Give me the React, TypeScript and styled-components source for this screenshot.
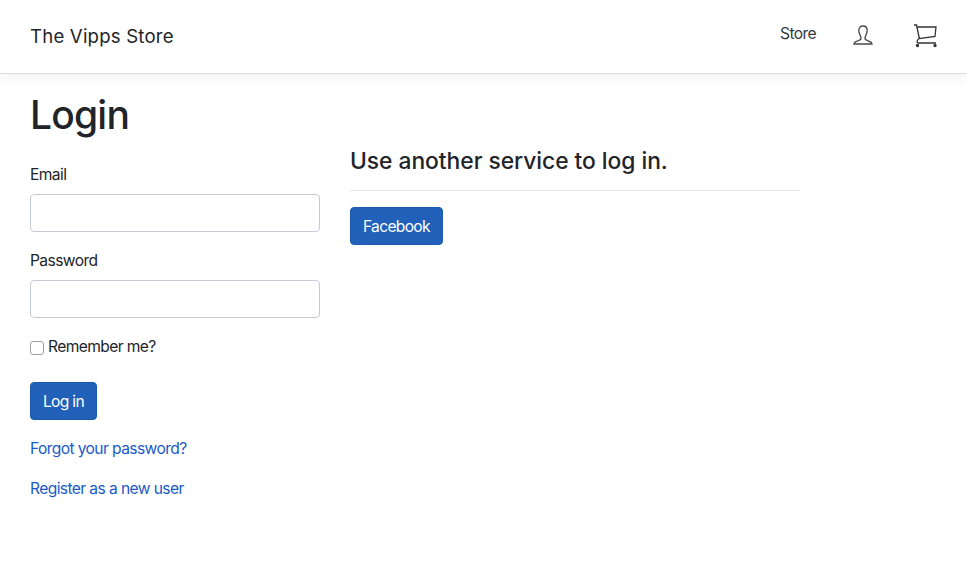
import React from 'react';
import styled, { createGlobalStyle } from 'styled-components';

const Global = createGlobalStyle`
  *, *::before, *::after { box-sizing: border-box; }
  body { margin: 0; background: #fff; color: #212529; font-family: Inter, "Liberation Sans", sans-serif; font-size: 15.6px; line-height: 24px; letter-spacing: -0.6px; }
`;
const Header = styled.header`
  height: 74px; display: flex; align-items: center; padding: 0 29px 0 30px;
  border-bottom: 1px solid #dcdcdc; box-shadow: 0 2px 14px rgba(0,0,0,.07);
`;
const Brand = styled.a`font-size: 18.6px; letter-spacing: 0.2px; margin: -2px auto 0 0; color: #212529;`;
const Nav = styled.nav`display: flex; align-items: center; height: 74px;`;
const NavLink = styled.a`margin: -5px 36px 0 0; color: #343a40;`;
const UserIcon = styled.svg`width: 22px; height: 22px; margin-right: 39px; margin-top: -3px;`;
const CartIcon = styled.svg`width: 25px; height: 25px; margin-top: -2px;`;
const Main = styled.main`padding: 17px 30px;`;
const Title = styled.h1`margin: 0 0 23px; font-size: 39px; line-height: 48px; font-weight: 500; letter-spacing: -0.8px;`;
const Columns = styled.div`display: flex; gap: 30px; align-items: flex-start;`;
const Form = styled.form`width: 290px;`;
const Services = styled.section`width: 450px; margin-top: -16px;`;
const Label = styled.label`display: block; height: 24px; margin-bottom: 8px; padding-top: 1px;`;
const Input = styled.input`display: block; width: 100%; height: 38px; margin: 0 0 16px; border: 1px solid #c6cad8; border-radius: 4px; padding: 6px 12px;`;
const Check = styled.label`display: flex; align-items: center; gap: 4px; height: 24px; margin-bottom: 24px; padding-top: 2px;`;
const Box = styled.input`
  appearance: none; width: 14px; height: 14px; margin: 1px 0 0; border: 1px solid #a0a0a0; border-radius: 3px; background: #fff;
  &:checked { background: #2161b9; }
`;
const Button = styled.button`
  display: block; height: 38px; padding: 2px 12px 0; border: 1px solid #1b5aac; border-radius: 4px; background: #2161b9; color: #fff;
  font: inherit; letter-spacing: -0.7px; white-space: nowrap;
`;
const Link = styled.a`display: block; width: max-content; height: 24px; margin-top: 16px; padding-top: 1px; color: #1b5ac8;`;
const Heading = styled.h4`margin: 0; font-size: 22.8px; line-height: 29px; font-weight: 500; letter-spacing: -0.03px;`;
const Rule = styled.hr`margin: 15px 0 16px; border: 0; border-top: 1px solid #e5e5e5;`;

export default function App() {
  return <><Global />
    <Header><Brand>The Vipps Store</Brand>
      <Nav><NavLink>Store</NavLink>
        <UserIcon viewBox="0 0 22 22" fill="none" stroke="#484848" strokeWidth="1.3"><path d="M9 14.5C9 11.5 6.800 10 6.800 6.500C6.800 3.500 8.500 2 11 2s4.200 1.500 4.200 4.500C15.200 10 13 11.500 13 14.500C13 17.500 20 16 20 20H2C2 16 9 17.500 9 14.500Z" /></UserIcon>
        <CartIcon viewBox="0 0 25 25" fill="none" stroke="#333" strokeWidth="1.3"><path d="M1 2h2.500l3 14M4 4h19l-1 9.500-16 2c-2 1.500-2.500 4-1 4.500h18" /><circle cx="4.500" cy="22.500" r="1" fill="#333" /><circle cx="22" cy="22.500" r="1" fill="#333" /></CartIcon>
      </Nav>
    </Header>
    <Main><Title>Login</Title>
      <Columns>
        <Form><Label htmlFor="email">Email</Label><Input id="email" /><Label htmlFor="password">Password</Label><Input id="password" type="password" />
          <Check><Box type="checkbox" />Remember me?</Check><Button type="button">Log in</Button><Link>Forgot your password?</Link><Link>Register as a new user</Link></Form>
        <Services><Heading>Use another service to log in.</Heading><Rule /><Button>Facebook</Button></Services>
      </Columns></Main></>;
}
